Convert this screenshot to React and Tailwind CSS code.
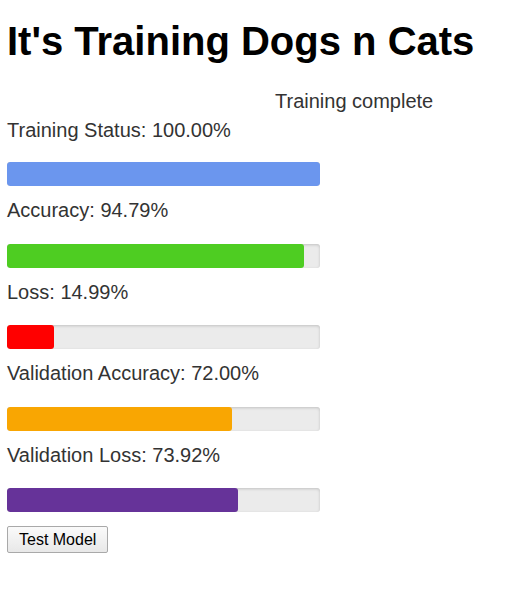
import React from 'react';

const metrics = [
  { label: 'Training Status', value: 100.0, color: 'bg-[#6b96ee]' },
  { label: 'Accuracy', value: 94.79, color: 'bg-[#4ecd22]' },
  { label: 'Loss', value: 14.99, color: 'bg-[#ff0000]' },
  { label: 'Validation Accuracy', value: 72.0, color: 'bg-[#f9a602]' },
  { label: 'Validation Loss', value: 73.92, color: 'bg-[#663399]' },
];

const ProgressBar = ({ value, color }) => (
  <div className="w-[313px] h-[24px] mb-[10px] bg-[#ebebeb] rounded-[3px] shadow-[inset_0_1px_3px_rgba(0,0,0,0.18)] overflow-hidden">
    <div className={`h-full rounded-[3px] ${color}`} style={{ width: `${value}%` }} />
  </div>
);

const App = () => {
  return (
    <div className="min-h-[615px] bg-white px-[7px] pt-[19px] text-[#333] font-['Liberation_Sans',Arial,sans-serif]">
      <h1 className="text-[40px] leading-[44px] font-bold text-black mb-[24px]">It's Training Dogs n Cats</h1>

      <div className="text-[20px] leading-[28.5px] pl-[268px]">Training complete</div>

      {metrics.map((m, i) => (
        <div key={m.label}>
          <div className={`text-[20px] leading-[28.5px] ${i === 0 ? 'mb-[18px]' : 'mb-[19px]'}`}>
            {m.label}: {m.value.toFixed(2)}%
          </div>
          <ProgressBar value={m.value} color={m.color} />
        </div>
      ))}

      <button className="mt-[4px] h-[27px] px-[11px] text-[16px] leading-none text-black bg-gradient-to-b from-[#fafafa] to-[#e8e8e8] border border-[#a9a9a9] rounded-[2px]">
        Test Model
      </button>
    </div>
  );
};

export default App;
